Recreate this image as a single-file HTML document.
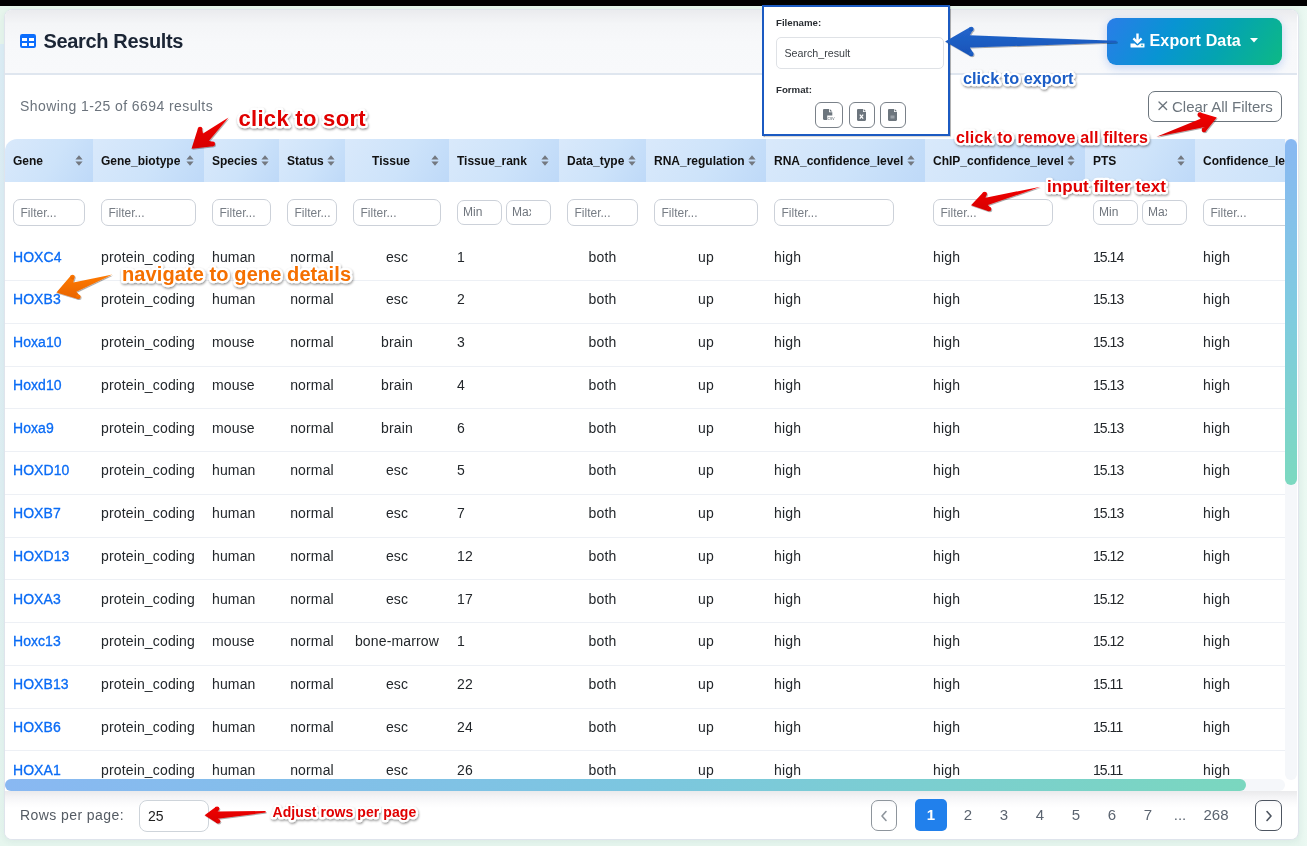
<!DOCTYPE html>
<html><head><meta charset="utf-8">
<style>
*{box-sizing:border-box;margin:0;padding:0}
html,body{width:1307px;height:846px;overflow:hidden}
#card,#popup,#arrows,#anntext{will-change:transform}
body{font-family:"Liberation Sans",sans-serif;position:relative;
 background:linear-gradient(180deg,#e6f5ec 0px,#e6f5ec 43.5px,#dcedf5 44px,#dfeff2 500px,#e6f6ee 846px);}
.abs{position:absolute}
#topbar{position:absolute;left:0;top:0;width:1307px;height:6px;background:#000}
#rightbg{position:absolute;left:1298px;top:6px;width:9px;height:840px;background:linear-gradient(90deg,#e6f5ee,#ebf9f2)}
#card{position:absolute;left:4px;top:9px;width:1294.6px;height:830.5px;background:#fff;border:1px solid #dfe4ec;border-radius:8px;overflow:hidden;
 box-shadow:0 2px 6px rgba(40,60,90,0.06)}
#chead{position:absolute;left:0;top:0;width:1292px;height:64.5px;background:linear-gradient(180deg,#eaebee 0%,#f4f5f7 22%,#f7f8fa 50%,#f8f9fb 100%);border-bottom:2px solid #dfe6ef}
#title{position:absolute;left:38.5px;top:19px;font-size:20px;font-weight:bold;color:#1b2535;letter-spacing:-0.35px;line-height:24px}
#ticon{position:absolute;left:15px;top:24px}
#exportbtn{position:absolute;left:1102px;top:7.7px;width:175px;height:47px;border-radius:9px;
 background:linear-gradient(120deg,#2a7de8 0%,#0894d3 35%,#04a4b0 65%,#0db985 100%);
 box-shadow:0 3px 10px rgba(60,120,230,0.28)}
#exporttxt{position:absolute;left:42.5px;top:13.3px;color:#fff;font-size:16.1px;font-weight:bold;line-height:18px;letter-spacing:0.1px}
#showing{position:absolute;left:15px;top:88px;font-size:14px;color:#6b737c;letter-spacing:0.42px;line-height:16px}
#clearbtn{position:absolute;left:1143px;top:81.3px;width:134px;height:30.5px;border:1px solid #6c757d;border-radius:7px;color:#6c757d}
#cleartxt{position:absolute;left:23px;top:5.6px;font-size:15px;line-height:17px;white-space:nowrap}
#table{position:absolute;left:0px;top:128.5px;width:1292px;height:652px;overflow:hidden}
.th{position:absolute;top:0;height:43px;background:linear-gradient(120deg,#d9e9fb 0%,#cde3fa 55%,#bed9f8 100%)}
.tl{position:absolute;top:15px;font-size:12px;font-weight:bold;color:#111;line-height:14px;white-space:nowrap}
.sic{position:absolute;top:16px;width:8px;height:11px}
.si{display:block}
.fi{position:absolute;top:60.5px;height:27px;border:1px solid #ccd1d9;border-radius:7px;font-size:12px;color:#777d85;padding-left:6.5px;line-height:27px;white-space:nowrap;overflow:hidden;background:#fff}
.fr{position:absolute;top:61.5px;height:24.5px;border:1px solid #ccd1d9;border-radius:7px;font-size:12px;color:#6f757d;padding-left:5px;line-height:23.5px;white-space:nowrap;overflow:hidden;background:#fff}
.sep{position:absolute;left:0;width:1280px;height:1px;background:#edf0f5}
.td{position:absolute;font-size:14px;color:#23272b;line-height:16px;white-space:nowrap;letter-spacing:0.15px}
.gl{color:#0b6cf5;font-weight:normal;-webkit-text-stroke:0.3px #0b6cf5;letter-spacing:0.05px}
#vtrack{position:absolute;left:1280px;top:0;width:12px;height:641px;background:#f5f7fa;border-radius:0 0 6px 6px}
#vthumb{position:absolute;left:1280px;top:0.2px;width:12px;height:346px;border-radius:6px;background:linear-gradient(180deg,#89b8f2 0%,#7fcbe0 50%,#7cd9c0 100%)}
#htrack{position:absolute;left:0;top:640.5px;width:1280px;height:12px;background:#f5f7fa;border-radius:6px}
#hthumb{position:absolute;left:0px;top:640.5px;width:1241px;height:12px;border-radius:6px;background:linear-gradient(90deg,#89b8f2 0%,#7cc6e0 50%,#7ad7bf 100%)}
#footer{position:absolute;left:0;top:781px;width:1292px;height:50px;background:linear-gradient(180deg,#eaeaec 0%,#f4f4f6 12%,#fbfbfc 24%,#fff 34%,#fff 100%)}
#rpp{position:absolute;left:15px;top:15.5px;font-size:14px;color:#545b63;line-height:16px;letter-spacing:0.42px}
#rppin{position:absolute;left:134px;top:9px;width:69.5px;height:31.5px;border:1px solid #ced4da;border-radius:8px;background:#fff}
#rppin span{position:absolute;left:8px;top:7px;font-size:14px;line-height:16px;color:#222}
.pg{position:absolute;top:15px;font-size:15px;color:#5b6470;line-height:17px;text-align:center;width:30px}
#pprev{position:absolute;left:866px;top:9px;width:26px;height:31px;border:1px solid #8e959c;border-radius:7px}
#pnext{position:absolute;left:1250px;top:9px;width:26.5px;height:30.5px;border:1px solid #4d5560;border-radius:7px}
#pact{position:absolute;left:910px;top:8px;width:32px;height:32px;border-radius:5px;background:#2180ec}
.ann{position:absolute;font-weight:bold;white-space:nowrap;line-height:1;
 text-shadow:-2px -2px 0 #fff,2px -2px 0 #fff,-2px 2px 0 #fff,2px 2px 0 #fff,0 -2px 0 #fff,0 2px 0 #fff,-2px 0 0 #fff,2px 0 0 #fff,2px 3px 2px rgba(0,0,0,0.35)}
#popup{position:absolute;left:762px;top:5px;width:188px;height:130.5px;border:2px solid #1b5ac2;background:#fff;overflow:hidden;box-shadow:0.5px 1px 1px rgba(0,0,0,0.3)}
</style></head><body>
<div id="topbar"></div>
<div id="rightbg"></div>
<div id="card">
 <div id="chead">
  <svg id="ticon" width="16" height="14" viewBox="0 0 16 14"><rect x="0" y="0" width="16" height="14" rx="2.2" fill="#0d6efd"/><rect x="2" y="4" width="5" height="3" fill="#fff"/><rect x="9" y="4" width="5" height="3" fill="#fff"/><rect x="2" y="9" width="5" height="3" fill="#fff"/><rect x="9" y="9" width="5" height="3" fill="#fff"/></svg>
  <div id="title">Search Results</div>
  <div id="exportbtn">
   <svg style="position:absolute;left:23px;top:15px" width="15" height="15" viewBox="0 0 15 15"><path d="M6.3 0.5h2.4v6.2l2.1-2.1 1.6 1.6-4.9 4.9-4.9-4.9 1.6-1.6 2.1 2.1z" fill="#fff"/><path d="M0.5 10.5h4.3l1.6 1.6c0.6 0.6 1.6 0.6 2.2 0l1.6-1.6h4.3v3.5c0 0.4-0.3 0.6-0.6 0.6H1.1c-0.3 0-0.6-0.2-0.6-0.6z" fill="#fff"/><circle cx="12" cy="12.4" r="0.8" fill="#0aa0b5"/></svg>
   <div id="exporttxt">Export Data</div>
   <svg style="position:absolute;left:142.5px;top:20.5px" width="8" height="5" viewBox="0 0 8 5"><path d="M0 0h8L4 4.5z" fill="#fff"/></svg>
  </div>
 </div>
 <div id="showing">Showing 1-25 of 6694 results</div>
 <div id="clearbtn"><svg style="position:absolute;left:8.6px;top:9.2px" width="10" height="10" viewBox="0 0 10 10"><path d="M1 1L8.6 8.6M8.6 1L1 8.6" stroke="#6c757d" stroke-width="1.35" stroke-linecap="round"/></svg><span id="cleartxt">Clear All Filters</span></div>
 <div id="table">
<div class="th" style="left:0px;width:88px;border-top-left-radius:12px"><span class="tl" style="left:8px">Gene</span><span class="sic" style="left:70px"><svg class="si" width="8" height="11" viewBox="0 0 8 11"><path d="M4 0.3 L7.6 4.4 L0.4 4.4 Z M4 10.7 L7.6 6.6 L0.4 6.6 Z" fill="#737880"/></svg></span></div>
<div class="th" style="left:88px;width:111px"><span class="tl" style="left:8px">Gene_biotype</span><span class="sic" style="left:93px"><svg class="si" width="8" height="11" viewBox="0 0 8 11"><path d="M4 0.3 L7.6 4.4 L0.4 4.4 Z M4 10.7 L7.6 6.6 L0.4 6.6 Z" fill="#737880"/></svg></span></div>
<div class="th" style="left:199px;width:75px"><span class="tl" style="left:8px">Species</span><span class="sic" style="left:57px"><svg class="si" width="8" height="11" viewBox="0 0 8 11"><path d="M4 0.3 L7.6 4.4 L0.4 4.4 Z M4 10.7 L7.6 6.6 L0.4 6.6 Z" fill="#737880"/></svg></span></div>
<div class="th" style="left:274px;width:66px"><span class="tl" style="left:8px">Status</span><span class="sic" style="left:48px"><svg class="si" width="8" height="11" viewBox="0 0 8 11"><path d="M4 0.3 L7.6 4.4 L0.4 4.4 Z M4 10.7 L7.6 6.6 L0.4 6.6 Z" fill="#737880"/></svg></span></div>
<div class="th" style="left:340px;width:104px"><span class="tl" style="left:0;width:92px;text-align:center">Tissue</span><span class="sic" style="left:86px"><svg class="si" width="8" height="11" viewBox="0 0 8 11"><path d="M4 0.3 L7.6 4.4 L0.4 4.4 Z M4 10.7 L7.6 6.6 L0.4 6.6 Z" fill="#737880"/></svg></span></div>
<div class="th" style="left:444px;width:110px"><span class="tl" style="left:8px">Tissue_rank</span><span class="sic" style="left:92px"><svg class="si" width="8" height="11" viewBox="0 0 8 11"><path d="M4 0.3 L7.6 4.4 L0.4 4.4 Z M4 10.7 L7.6 6.6 L0.4 6.6 Z" fill="#737880"/></svg></span></div>
<div class="th" style="left:554px;width:87px"><span class="tl" style="left:8px">Data_type</span><span class="sic" style="left:69px"><svg class="si" width="8" height="11" viewBox="0 0 8 11"><path d="M4 0.3 L7.6 4.4 L0.4 4.4 Z M4 10.7 L7.6 6.6 L0.4 6.6 Z" fill="#737880"/></svg></span></div>
<div class="th" style="left:641px;width:120px"><span class="tl" style="left:8px">RNA_regulation</span><span class="sic" style="left:102px"><svg class="si" width="8" height="11" viewBox="0 0 8 11"><path d="M4 0.3 L7.6 4.4 L0.4 4.4 Z M4 10.7 L7.6 6.6 L0.4 6.6 Z" fill="#737880"/></svg></span></div>
<div class="th" style="left:761px;width:159px"><span class="tl" style="left:8px">RNA_confidence_level</span><span class="sic" style="left:141px"><svg class="si" width="8" height="11" viewBox="0 0 8 11"><path d="M4 0.3 L7.6 4.4 L0.4 4.4 Z M4 10.7 L7.6 6.6 L0.4 6.6 Z" fill="#737880"/></svg></span></div>
<div class="th" style="left:920px;width:160px"><span class="tl" style="left:8px">ChIP_confidence_level</span><span class="sic" style="left:142px"><svg class="si" width="8" height="11" viewBox="0 0 8 11"><path d="M4 0.3 L7.6 4.4 L0.4 4.4 Z M4 10.7 L7.6 6.6 L0.4 6.6 Z" fill="#737880"/></svg></span></div>
<div class="th" style="left:1080px;width:110px"><span class="tl" style="left:8px">PTS</span><span class="sic" style="left:92px"><svg class="si" width="8" height="11" viewBox="0 0 8 11"><path d="M4 0.3 L7.6 4.4 L0.4 4.4 Z M4 10.7 L7.6 6.6 L0.4 6.6 Z" fill="#737880"/></svg></span></div>
<div class="th" style="left:1190px;width:160px"><span class="tl" style="left:8px">Confidence_level</span><span class="sic" style="left:142px"><svg class="si" width="8" height="11" viewBox="0 0 8 11"><path d="M4 0.3 L7.6 4.4 L0.4 4.4 Z M4 10.7 L7.6 6.6 L0.4 6.6 Z" fill="#737880"/></svg></span></div>
<div class="fi" style="left:8px;width:72px">Filter...</div>
<div class="fi" style="left:96px;width:95px">Filter...</div>
<div class="fi" style="left:207px;width:59px">Filter...</div>
<div class="fi" style="left:282px;width:50px">Filter...</div>
<div class="fi" style="left:348px;width:88px">Filter...</div>
<div class="fr" style="left:452px;width:45px">Min</div><div class="fr" style="left:501px;width:45px"><span style="display:inline-block;width:19px;overflow:hidden;vertical-align:top">Max</span></div>
<div class="fi" style="left:562px;width:71px">Filter...</div>
<div class="fi" style="left:649px;width:104px">Filter...</div>
<div class="fi" style="left:769px;width:120px">Filter...</div>
<div class="fi" style="left:928px;width:120px">Filter...</div>
<div class="fr" style="left:1088px;width:45px">Min</div><div class="fr" style="left:1137px;width:45px"><span style="display:inline-block;width:19px;overflow:hidden;vertical-align:top">Max</span></div>
<div class="fi" style="left:1198px;width:120px">Filter...</div>
<span class="td gl" style="left:8px;top:110.10px">HOXC4</span>
<span class="td" style="left:96px;top:110.10px">protein_coding</span>
<span class="td" style="left:207px;top:110.10px">human</span>
<span class="td" style="left:274px;top:110.10px;width:66px;text-align:center">normal</span>
<span class="td" style="left:340px;top:110.10px;width:104px;text-align:center">esc</span>
<span class="td" style="left:452px;top:110.10px">1</span>
<span class="td" style="left:554px;top:110.10px;width:87px;text-align:center">both</span>
<span class="td" style="left:641px;top:110.10px;width:120px;text-align:center">up</span>
<span class="td" style="left:769px;top:110.10px">high</span>
<span class="td" style="left:928px;top:110.10px">high</span>
<span class="td" style="left:1088px;top:110.10px;letter-spacing:-0.95px">15.14</span>
<span class="td" style="left:1198px;top:110.10px">high</span>
<span class="td gl" style="left:8px;top:152.85px">HOXB3</span>
<span class="td" style="left:96px;top:152.85px">protein_coding</span>
<span class="td" style="left:207px;top:152.85px">human</span>
<span class="td" style="left:274px;top:152.85px;width:66px;text-align:center">normal</span>
<span class="td" style="left:340px;top:152.85px;width:104px;text-align:center">esc</span>
<span class="td" style="left:452px;top:152.85px">2</span>
<span class="td" style="left:554px;top:152.85px;width:87px;text-align:center">both</span>
<span class="td" style="left:641px;top:152.85px;width:120px;text-align:center">up</span>
<span class="td" style="left:769px;top:152.85px">high</span>
<span class="td" style="left:928px;top:152.85px">high</span>
<span class="td" style="left:1088px;top:152.85px;letter-spacing:-0.95px">15.13</span>
<span class="td" style="left:1198px;top:152.85px">high</span>
<span class="td gl" style="left:8px;top:195.60px">Hoxa10</span>
<span class="td" style="left:96px;top:195.60px">protein_coding</span>
<span class="td" style="left:207px;top:195.60px">mouse</span>
<span class="td" style="left:274px;top:195.60px;width:66px;text-align:center">normal</span>
<span class="td" style="left:340px;top:195.60px;width:104px;text-align:center">brain</span>
<span class="td" style="left:452px;top:195.60px">3</span>
<span class="td" style="left:554px;top:195.60px;width:87px;text-align:center">both</span>
<span class="td" style="left:641px;top:195.60px;width:120px;text-align:center">up</span>
<span class="td" style="left:769px;top:195.60px">high</span>
<span class="td" style="left:928px;top:195.60px">high</span>
<span class="td" style="left:1088px;top:195.60px;letter-spacing:-0.95px">15.13</span>
<span class="td" style="left:1198px;top:195.60px">high</span>
<span class="td gl" style="left:8px;top:238.35px">Hoxd10</span>
<span class="td" style="left:96px;top:238.35px">protein_coding</span>
<span class="td" style="left:207px;top:238.35px">mouse</span>
<span class="td" style="left:274px;top:238.35px;width:66px;text-align:center">normal</span>
<span class="td" style="left:340px;top:238.35px;width:104px;text-align:center">brain</span>
<span class="td" style="left:452px;top:238.35px">4</span>
<span class="td" style="left:554px;top:238.35px;width:87px;text-align:center">both</span>
<span class="td" style="left:641px;top:238.35px;width:120px;text-align:center">up</span>
<span class="td" style="left:769px;top:238.35px">high</span>
<span class="td" style="left:928px;top:238.35px">high</span>
<span class="td" style="left:1088px;top:238.35px;letter-spacing:-0.95px">15.13</span>
<span class="td" style="left:1198px;top:238.35px">high</span>
<span class="td gl" style="left:8px;top:281.10px">Hoxa9</span>
<span class="td" style="left:96px;top:281.10px">protein_coding</span>
<span class="td" style="left:207px;top:281.10px">mouse</span>
<span class="td" style="left:274px;top:281.10px;width:66px;text-align:center">normal</span>
<span class="td" style="left:340px;top:281.10px;width:104px;text-align:center">brain</span>
<span class="td" style="left:452px;top:281.10px">6</span>
<span class="td" style="left:554px;top:281.10px;width:87px;text-align:center">both</span>
<span class="td" style="left:641px;top:281.10px;width:120px;text-align:center">up</span>
<span class="td" style="left:769px;top:281.10px">high</span>
<span class="td" style="left:928px;top:281.10px">high</span>
<span class="td" style="left:1088px;top:281.10px;letter-spacing:-0.95px">15.13</span>
<span class="td" style="left:1198px;top:281.10px">high</span>
<span class="td gl" style="left:8px;top:323.85px">HOXD10</span>
<span class="td" style="left:96px;top:323.85px">protein_coding</span>
<span class="td" style="left:207px;top:323.85px">human</span>
<span class="td" style="left:274px;top:323.85px;width:66px;text-align:center">normal</span>
<span class="td" style="left:340px;top:323.85px;width:104px;text-align:center">esc</span>
<span class="td" style="left:452px;top:323.85px">5</span>
<span class="td" style="left:554px;top:323.85px;width:87px;text-align:center">both</span>
<span class="td" style="left:641px;top:323.85px;width:120px;text-align:center">up</span>
<span class="td" style="left:769px;top:323.85px">high</span>
<span class="td" style="left:928px;top:323.85px">high</span>
<span class="td" style="left:1088px;top:323.85px;letter-spacing:-0.95px">15.13</span>
<span class="td" style="left:1198px;top:323.85px">high</span>
<span class="td gl" style="left:8px;top:366.60px">HOXB7</span>
<span class="td" style="left:96px;top:366.60px">protein_coding</span>
<span class="td" style="left:207px;top:366.60px">human</span>
<span class="td" style="left:274px;top:366.60px;width:66px;text-align:center">normal</span>
<span class="td" style="left:340px;top:366.60px;width:104px;text-align:center">esc</span>
<span class="td" style="left:452px;top:366.60px">7</span>
<span class="td" style="left:554px;top:366.60px;width:87px;text-align:center">both</span>
<span class="td" style="left:641px;top:366.60px;width:120px;text-align:center">up</span>
<span class="td" style="left:769px;top:366.60px">high</span>
<span class="td" style="left:928px;top:366.60px">high</span>
<span class="td" style="left:1088px;top:366.60px;letter-spacing:-0.95px">15.13</span>
<span class="td" style="left:1198px;top:366.60px">high</span>
<span class="td gl" style="left:8px;top:409.35px">HOXD13</span>
<span class="td" style="left:96px;top:409.35px">protein_coding</span>
<span class="td" style="left:207px;top:409.35px">human</span>
<span class="td" style="left:274px;top:409.35px;width:66px;text-align:center">normal</span>
<span class="td" style="left:340px;top:409.35px;width:104px;text-align:center">esc</span>
<span class="td" style="left:452px;top:409.35px">12</span>
<span class="td" style="left:554px;top:409.35px;width:87px;text-align:center">both</span>
<span class="td" style="left:641px;top:409.35px;width:120px;text-align:center">up</span>
<span class="td" style="left:769px;top:409.35px">high</span>
<span class="td" style="left:928px;top:409.35px">high</span>
<span class="td" style="left:1088px;top:409.35px;letter-spacing:-0.95px">15.12</span>
<span class="td" style="left:1198px;top:409.35px">high</span>
<span class="td gl" style="left:8px;top:452.10px">HOXA3</span>
<span class="td" style="left:96px;top:452.10px">protein_coding</span>
<span class="td" style="left:207px;top:452.10px">human</span>
<span class="td" style="left:274px;top:452.10px;width:66px;text-align:center">normal</span>
<span class="td" style="left:340px;top:452.10px;width:104px;text-align:center">esc</span>
<span class="td" style="left:452px;top:452.10px">17</span>
<span class="td" style="left:554px;top:452.10px;width:87px;text-align:center">both</span>
<span class="td" style="left:641px;top:452.10px;width:120px;text-align:center">up</span>
<span class="td" style="left:769px;top:452.10px">high</span>
<span class="td" style="left:928px;top:452.10px">high</span>
<span class="td" style="left:1088px;top:452.10px;letter-spacing:-0.95px">15.12</span>
<span class="td" style="left:1198px;top:452.10px">high</span>
<span class="td gl" style="left:8px;top:494.85px">Hoxc13</span>
<span class="td" style="left:96px;top:494.85px">protein_coding</span>
<span class="td" style="left:207px;top:494.85px">mouse</span>
<span class="td" style="left:274px;top:494.85px;width:66px;text-align:center">normal</span>
<span class="td" style="left:340px;top:494.85px;width:104px;text-align:center">bone-marrow</span>
<span class="td" style="left:452px;top:494.85px">1</span>
<span class="td" style="left:554px;top:494.85px;width:87px;text-align:center">both</span>
<span class="td" style="left:641px;top:494.85px;width:120px;text-align:center">up</span>
<span class="td" style="left:769px;top:494.85px">high</span>
<span class="td" style="left:928px;top:494.85px">high</span>
<span class="td" style="left:1088px;top:494.85px;letter-spacing:-0.95px">15.12</span>
<span class="td" style="left:1198px;top:494.85px">high</span>
<span class="td gl" style="left:8px;top:537.60px">HOXB13</span>
<span class="td" style="left:96px;top:537.60px">protein_coding</span>
<span class="td" style="left:207px;top:537.60px">human</span>
<span class="td" style="left:274px;top:537.60px;width:66px;text-align:center">normal</span>
<span class="td" style="left:340px;top:537.60px;width:104px;text-align:center">esc</span>
<span class="td" style="left:452px;top:537.60px">22</span>
<span class="td" style="left:554px;top:537.60px;width:87px;text-align:center">both</span>
<span class="td" style="left:641px;top:537.60px;width:120px;text-align:center">up</span>
<span class="td" style="left:769px;top:537.60px">high</span>
<span class="td" style="left:928px;top:537.60px">high</span>
<span class="td" style="left:1088px;top:537.60px;letter-spacing:-0.95px">15.11</span>
<span class="td" style="left:1198px;top:537.60px">high</span>
<span class="td gl" style="left:8px;top:580.35px">HOXB6</span>
<span class="td" style="left:96px;top:580.35px">protein_coding</span>
<span class="td" style="left:207px;top:580.35px">human</span>
<span class="td" style="left:274px;top:580.35px;width:66px;text-align:center">normal</span>
<span class="td" style="left:340px;top:580.35px;width:104px;text-align:center">esc</span>
<span class="td" style="left:452px;top:580.35px">24</span>
<span class="td" style="left:554px;top:580.35px;width:87px;text-align:center">both</span>
<span class="td" style="left:641px;top:580.35px;width:120px;text-align:center">up</span>
<span class="td" style="left:769px;top:580.35px">high</span>
<span class="td" style="left:928px;top:580.35px">high</span>
<span class="td" style="left:1088px;top:580.35px;letter-spacing:-0.95px">15.11</span>
<span class="td" style="left:1198px;top:580.35px">high</span>
<span class="td gl" style="left:8px;top:623.10px">HOXA1</span>
<span class="td" style="left:96px;top:623.10px">protein_coding</span>
<span class="td" style="left:207px;top:623.10px">human</span>
<span class="td" style="left:274px;top:623.10px;width:66px;text-align:center">normal</span>
<span class="td" style="left:340px;top:623.10px;width:104px;text-align:center">esc</span>
<span class="td" style="left:452px;top:623.10px">26</span>
<span class="td" style="left:554px;top:623.10px;width:87px;text-align:center">both</span>
<span class="td" style="left:641px;top:623.10px;width:120px;text-align:center">up</span>
<span class="td" style="left:769px;top:623.10px">high</span>
<span class="td" style="left:928px;top:623.10px">high</span>
<span class="td" style="left:1088px;top:623.10px;letter-spacing:-0.95px">15.11</span>
<span class="td" style="left:1198px;top:623.10px">high</span>
<div class="sep" style="top:141.50px"></div>
<div class="sep" style="top:184.25px"></div>
<div class="sep" style="top:227.00px"></div>
<div class="sep" style="top:269.75px"></div>
<div class="sep" style="top:312.50px"></div>
<div class="sep" style="top:355.25px"></div>
<div class="sep" style="top:398.00px"></div>
<div class="sep" style="top:440.75px"></div>
<div class="sep" style="top:483.50px"></div>
<div class="sep" style="top:526.25px"></div>
<div class="sep" style="top:569.00px"></div>
<div class="sep" style="top:611.75px"></div>
  <div id="vtrack"></div><div id="vthumb"></div>
  <div id="htrack"></div><div id="hthumb"></div>
 </div>
 <div id="footer">
  <div id="rpp">Rows per page:</div>
  <div id="rppin"><span>25</span></div>
  <div id="pprev"><svg style="position:absolute;left:8px;top:9px" width="8" height="12" viewBox="0 0 8 12"><path d="M6 1.5L2 6l4 4.5" stroke="#8e959c" stroke-width="1.6" fill="none" stroke-linecap="round" stroke-linejoin="round"/></svg></div>
  <div id="pact"></div>
  <div class="pg" style="left:910px;color:#fff;font-weight:bold;width:32px">1</div>
  <div class="pg" style="left:948px">2</div>
  <div class="pg" style="left:984px">3</div>
  <div class="pg" style="left:1020px">4</div>
  <div class="pg" style="left:1056px">5</div>
  <div class="pg" style="left:1092px">6</div>
  <div class="pg" style="left:1128px">7</div>
  <div class="pg" style="left:1160px">...</div>
  <div class="pg" style="left:1191px;width:40px">268</div>
  <div id="pnext"><svg style="position:absolute;left:9px;top:9px" width="8" height="12" viewBox="0 0 8 12"><path d="M2 1.5L6 6l-4 4.5" stroke="#4d5560" stroke-width="1.6" fill="none" stroke-linecap="round" stroke-linejoin="round"/></svg></div>
 </div>
</div>

<!-- popup -->
<div id="popup">
 <div class="abs" style="left:12px;top:10.3px;font-size:9.7px;font-weight:bold;color:#2a2e33;line-height:12px">Filename:</div>
 <div class="abs" style="left:12px;top:29.5px;width:168px;height:32.5px;border:1px solid #dfe2e6;border-radius:5px"><span class="abs" style="left:7.4px;top:9px;font-size:10.7px;color:#3a3f44;line-height:13px">Search_result</span></div>
 <div class="abs" style="left:12px;top:77px;font-size:9.7px;font-weight:bold;color:#2a2e33;line-height:12px">Format:</div>
 <div class="abs" style="left:51px;top:95px;width:28px;height:26px;border:1px solid #7a8189;border-radius:6px"></div>
 <div class="abs" style="left:85px;top:95px;width:26px;height:26px;border:1px solid #7a8189;border-radius:6px"></div>
 <div class="abs" style="left:116px;top:95px;width:26px;height:26px;border:1px solid #7a8189;border-radius:6px"></div>
 <svg class="abs" style="left:59px;top:102px" width="12" height="13" viewBox="0 0 12 13"><path d="M1.2 0h4.8v3.3h3.3V6.5H4.2v4.5H1.2C0.5 11 0 10.5 0 9.8V1.2C0 0.5 0.5 0 1.2 0z M6.8 0l2.5 2.5H6.8z" fill="#6c757d"/><text x="4.6" y="11" font-size="4.6" font-family="Liberation Sans" fill="#6c757d">csv</text></svg>
 <svg class="abs" style="left:93px;top:102px" width="9" height="12" viewBox="0 0 9 12"><path d="M1.2 0h4.8v3h3v7.8c0 0.7-0.5 1.2-1.2 1.2H1.2C0.5 12 0 11.5 0 10.8V1.2C0 0.5 0.5 0 1.2 0z M6.7 0l2.3 2.3H6.7z" fill="#6c757d"/><path d="M2.8 5.6l3.4 4 M6.2 5.6l-3.4 4" stroke="#fff" stroke-width="1.2"/></svg>
 <svg class="abs" style="left:124px;top:102px" width="9" height="12" viewBox="0 0 9 12"><path d="M1.2 0h4.8v3h3v7.8c0 0.7-0.5 1.2-1.2 1.2H1.2C0.5 12 0 11.5 0 10.8V1.2C0 0.5 0.5 0 1.2 0z M6.7 0l2.3 2.3H6.7z" fill="#6c757d"/><rect x="2.5" y="6.5" width="4" height="3" fill="#9aa1a8"/></svg>
</div>



<svg id="arrows" style="position:absolute;left:0;top:0" width="1307" height="846" viewBox="0 0 1307 846">
 <defs>
  <filter id="sh" x="-20%" y="-20%" width="140%" height="140%"><feDropShadow dx="0.8" dy="1" stdDeviation="0.6" flood-color="#000" flood-opacity="0.35"/></filter>
  <linearGradient id="gred" x1="0" y1="0" x2="0" y2="1"><stop offset="0" stop-color="#f20000"/><stop offset="1" stop-color="#d60000"/></linearGradient>
  <linearGradient id="gor" x1="0" y1="0" x2="0" y2="1"><stop offset="0" stop-color="#ff7a00"/><stop offset="1" stop-color="#e86400"/></linearGradient>
  <linearGradient id="gbl" x1="0" y1="0" x2="0" y2="1"><stop offset="0" stop-color="#2366cc"/><stop offset="1" stop-color="#1753b8"/></linearGradient>
 </defs>
 <g filter="url(#sh)">
  <path fill="url(#gred)" d="M191.50,148.70 L197.97,128.18 L202.18,130.03 L203.00,133.40 L228.50,117.40 L209.00,140.80 L212.25,141.66 L213.26,146.15Z"/><circle cx="200.08" cy="129.11" r="2.3" fill="url(#gred)"/><circle cx="212.76" cy="143.91" r="2.3" fill="url(#gred)"/>
  <path fill="url(#gor)" d="M56.40,292.60 L70.95,275.43 L74.13,278.75 L73.30,282.50 L112.40,274.60 L76.30,291.70 L78.77,294.51 L77.91,299.03Z"/><circle cx="72.54" cy="277.09" r="2.3" fill="url(#gor)"/><circle cx="78.34" cy="296.77" r="2.3" fill="url(#gor)"/>
  <path fill="url(#gbl)" d="M945.10,41.50 L970.33,26.91 L972.31,31.07 L969.80,35.30 L1116.60,40.80 L1116.60,42.60 L969.80,47.60 L972.31,51.84 L970.34,55.99Z"/><circle cx="971.32" cy="28.99" r="2.3" fill="url(#gbl)"/><circle cx="971.32" cy="53.92" r="2.3" fill="url(#gbl)"/>
  <path fill="url(#gred)" d="M1216.80,117.40 L1205.55,131.55 L1202.35,128.25 L1204.70,127.00 L1156.50,136.70 L1200.60,118.80 L1199.41,116.94 L1200.14,112.39Z"/><circle cx="1203.95" cy="129.90" r="2.3" fill="url(#gred)"/><circle cx="1199.77" cy="114.66" r="2.3" fill="url(#gred)"/>
  <path fill="url(#gred)" d="M971.00,205.30 L983.26,192.28 L986.18,195.84 L985.50,197.70 L1040.60,186.70 L987.90,205.00 L989.50,206.69 L988.59,211.20Z"/><circle cx="984.72" cy="194.06" r="2.3" fill="url(#gred)"/><circle cx="989.05" cy="208.94" r="2.3" fill="url(#gred)"/>
  <path fill="url(#gred)" d="M204.60,815.30 L216.00,806.73 L218.13,810.80 L217.70,811.50 L265.60,811.00 L265.60,812.60 L217.70,818.80 L218.93,819.16 L217.06,823.37Z"/><circle cx="217.06" cy="808.77" r="2.3" fill="url(#gred)"/><circle cx="218.00" cy="821.26" r="2.3" fill="url(#gred)"/>
 </g>
</svg>

<svg id="anntext" style="position:absolute;left:0;top:0" width="1307" height="846" viewBox="0 0 1307 846">
 <defs><filter id="tsh" x="-10%" y="-30%" width="120%" height="160%"><feDropShadow dx="0.6" dy="1.4" stdDeviation="0.8" flood-color="#000" flood-opacity="0.45"/></filter></defs>
 <g font-family="Liberation Sans" font-weight="bold" stroke="#fff" stroke-width="4.6" stroke-linejoin="round" paint-order="stroke" filter="url(#tsh)">
  <text x="238.5" y="126" font-size="22" letter-spacing="0.3" fill="#e00000">click to sort</text>
  <text x="122" y="280.6" font-size="20" letter-spacing="0.1" fill="#f56f00">navigate to gene details</text>
  <text x="963" y="84.4" font-size="16.3" fill="#1a5dc6">click to export</text>
  <text x="956" y="142.5" font-size="16" letter-spacing="0.2" fill="#e00000">click to remove all filters</text>
  <text x="1047" y="191.5" font-size="17" letter-spacing="0.05" fill="#e00000">input filter text</text>
  <text x="272.5" y="816.9" font-size="14" letter-spacing="0.07" fill="#e00000">Adjust rows per page</text>
 </g>
</svg>
</body></html>
